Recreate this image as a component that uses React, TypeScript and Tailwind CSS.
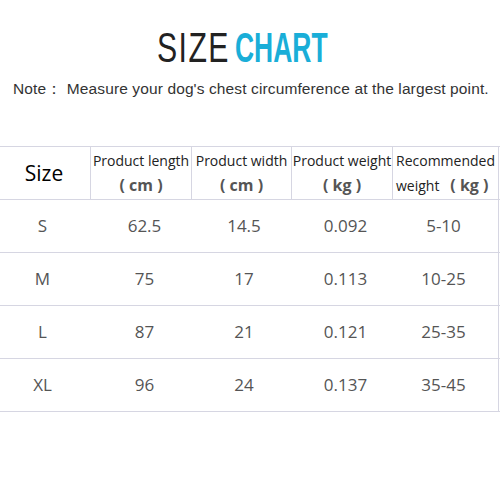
import React from "react";

const rows = [
  ["S", "62.5", "14.5", "0.092", "5-10"],
  ["M", "75", "17", "0.113", "10-25"],
  ["L", "87", "21", "0.121", "25-35"],
  ["XL", "96", "24", "0.137", "35-45"],
];

const cols = "grid grid-cols-[91px_101px_100px_101px_106px_1px]";
const body = { fontFamily: '"Open Sans", "Noto Sans", sans-serif' };

const Unit = ({ u }: { u: string }) => (
  <span className="font-bold text-[16px] text-[#555]">( {u} )</span>
);

export default function App() {
  return (
    <div className="w-[500px] h-[500px] bg-white overflow-hidden">
      <div className="pt-[27px] flex justify-center">
        <h1
          className="text-[42px] leading-[42px] flex gap-[10px] -ml-[16px]"
          style={{ fontFamily: '"Liberation Sans", Arial, sans-serif' }}
        >
          <span className="inline-block text-[#222] font-light tracking-[2px] scale-x-[0.72] w-[68px] origin-left">
            SIZE
          </span>
          <span className="inline-block text-[#1aaed8] font-bold scale-x-[0.63] w-[92px] origin-left">
            CHART
          </span>
        </h1>
      </div>
      <p
        className="mt-[10px] pl-[13px] text-[15.5px] leading-[20px] text-[#333] tracking-[0.12px] whitespace-nowrap"
        style={{ fontFamily: '"Liberation Sans", Arial, sans-serif' }}
      >
        Note： Measure your dog's chest circumference at the largest point.
      </p>

      <div className="mt-[47px]" style={body}>
        <div className={`${cols} h-[54px] border-t border-b border-[#d6d6e2] text-[14px] leading-[25px] text-[#222]`}>
          <div className="flex items-center justify-center border-r border-[#d6d6e2] text-[21px] text-black pr-[2px]">
            Size
          </div>
          <div className="flex flex-col items-center justify-center border-r border-[#d6d6e2]">
            <span>Product length</span>
            <Unit u="cm" />
          </div>
          <div className="flex flex-col items-center justify-center border-r border-[#d6d6e2]">
            <span>Product width</span>
            <Unit u="cm" />
          </div>
          <div className="flex flex-col items-center justify-center border-r border-[#d6d6e2]">
            <span>Product weight</span>
            <Unit u="kg" />
          </div>
          <div className="flex flex-col justify-center pl-[3px] border-r border-[#d6d6e2]">
            <span>Recommended</span>
            <span>
              weight&nbsp;&nbsp; <Unit u="kg" />
            </span>
          </div>
          <div />
        </div>
        {rows.map((r) => (
          <div
            key={r[0]}
            className={`${cols} h-[53px] border-b border-[#d6d6e2] text-[17px] text-[#555]`}
          >
            <div className="flex items-center justify-center pr-[6px]">{r[0]}</div>
            <div className="flex items-center justify-center pl-[6px]">{r[1]}</div>
            <div className="flex items-center justify-center pl-[4px]">{r[2]}</div>
            <div className="flex items-center justify-center pl-[6px]">{r[3]}</div>
            <div className="flex items-center justify-center border-r border-[#d6d6e2] pr-[4px]">{r[4]}</div>
            <div />
          </div>
        ))}
      </div>
    </div>
  );
}
